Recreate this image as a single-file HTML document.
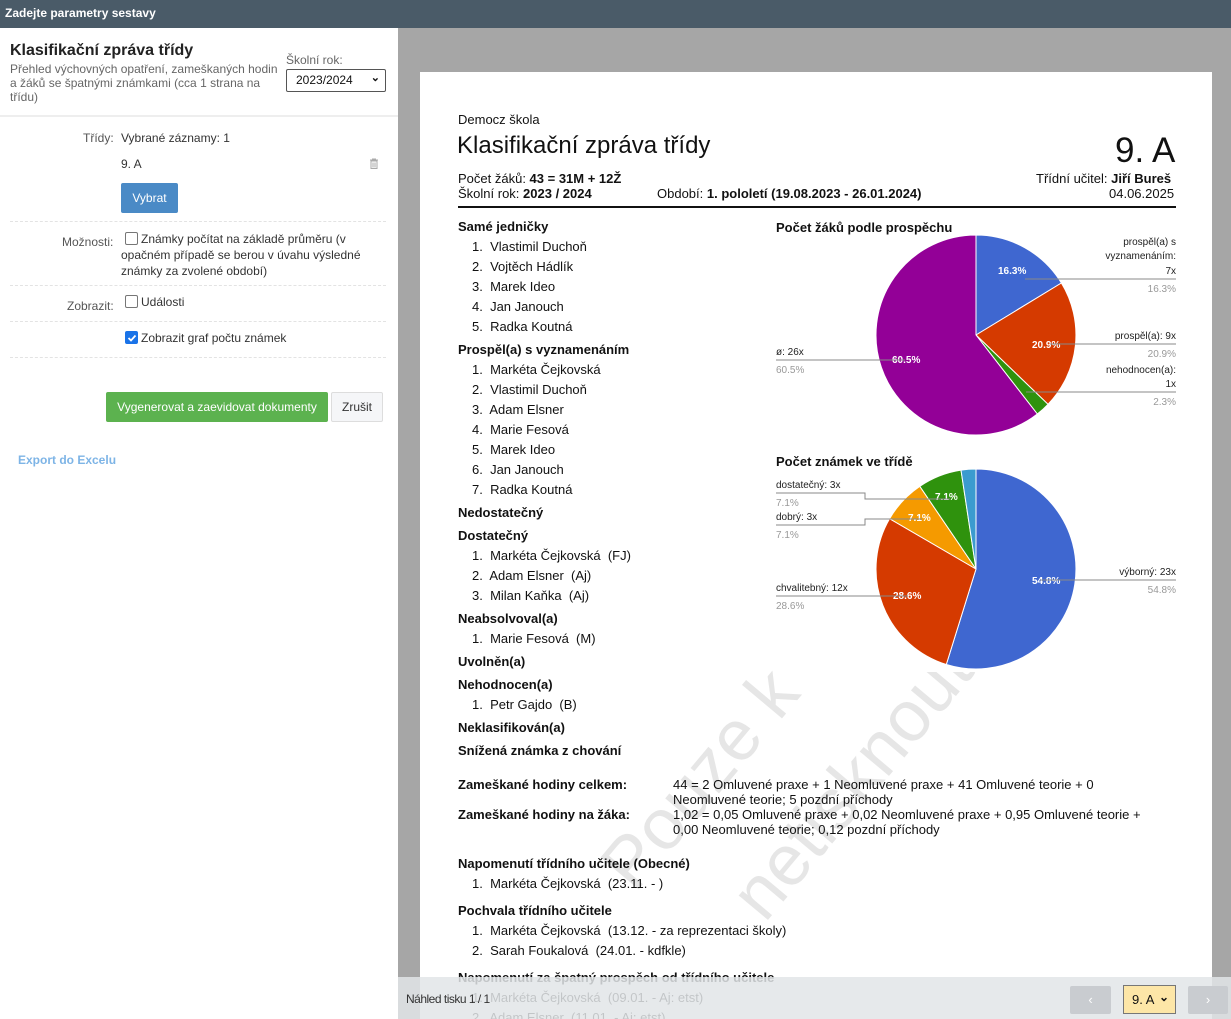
<!DOCTYPE html>
<html><head><meta charset="utf-8"><style>
*{margin:0;padding:0;box-sizing:border-box}
html,body{width:1231px;height:1019px;overflow:hidden}
body{position:relative;font-family:"Liberation Sans",Arial,sans-serif;background:#a6a6a6;color:#222}
.a{position:absolute;white-space:nowrap}
.top{left:0;top:0;width:1231px;height:28px;background:#4a5b68;color:#fff;font-weight:bold;font-size:12px;padding:6px 5px}
.left{left:0;top:28px;width:398px;height:991px;background:#fff}
.paper{left:420px;top:72px;width:792px;height:947px;background:#fff;overflow:hidden}
.p{font-size:13px;color:#111;line-height:16px}
.b{font-weight:bold}
.dash{position:absolute;left:10px;width:376px;border-top:1px dashed #e3e3e3}
.lbl{font-size:12px;color:#555}
.sm{font-size:12px;color:#333}
.cb{display:inline-block;width:13px;height:13px;border:1px solid #767676;border-radius:2px;vertical-align:-2px;margin-right:3px;background:#fff}
</style></head><body>
<div class="a top">Zadejte parametry sestavy</div>
<div class="a left">
 <div class="a b" style="left:10px;top:14px;font-size:16px;color:#222">Klasifikační zpráva třídy</div>
 <div class="a" style="left:10px;top:34px;width:272px;white-space:normal;font-size:12px;line-height:14px;color:#666">Přehled výchovných opatření, zameškaných hodin a žáků se špatnými známkami (cca 1 strana na třídu)</div>
 <div class="a" style="left:286px;top:25px;font-size:12px;color:#666">Školní rok:</div>
 <div class="a" style="left:286px;top:41px;width:100px;height:23px;border:1px solid #555;border-radius:2px;font-size:12px;padding:3px 9px;color:#111">2023/2024<span style="position:absolute;right:5px;top:1px;font-size:11px;font-weight:bold">&#8964;</span></div>
 <div class="a" style="left:0;top:87px;width:398px;height:2px;background:#eee"></div>
 <div class="a lbl" style="left:83px;top:103px">Třídy:</div>
 <div class="a sm" style="left:121px;top:103px">Vybrané záznamy: 1</div>
 <div class="a sm" style="left:121px;top:129px">9. A</div>
 <svg class="a" style="left:369px;top:130px" width="10" height="11" viewBox="0 0 10 11"><path d="M1 2h8M3.5 2V1h3v1M2 3h6v7.5H2z" fill="none" stroke="#aaa" stroke-width="1"/><path d="M4 4.5v5M6 4.5v5" stroke="#aaa"/></svg>
 <div class="a" style="left:121px;top:155px;width:57px;height:30px;background:#4a8ac6;border-radius:2px;color:#fff;font-size:12px;text-align:center;line-height:30px">Vybrat</div>
 <div class="dash" style="top:193px"></div>
 <div class="a lbl" style="left:62px;top:207px">Možnosti:</div>
 <div class="a sm" style="left:121px;top:203px;width:260px;white-space:normal;line-height:16px"><span class="cb" style="margin-left:4px"></span>Známky počítat na základě průměru (v opačném případě se berou v úvahu výsledné známky za zvolené období)</div>
 <div class="dash" style="top:257px"></div>
 <div class="a lbl" style="left:67px;top:271px">Zobrazit:</div>
 <div class="a sm" style="left:125px;top:267px"><span class="cb"></span>Události</div>
 <div class="dash" style="top:293px"></div>
 <div class="a sm" style="left:125px;top:303px"><span class="cb" style="background:#1a73e8;border-color:#1a73e8;position:relative"><svg style="position:absolute;left:1px;top:1px" width="10" height="10"><path d="M1.5 5l2.5 2.5 4.5-5" stroke="#fff" stroke-width="1.8" fill="none"/></svg></span>Zobrazit graf počtu známek</div>
 <div class="dash" style="top:329px"></div>
 <div class="a" style="left:106px;top:364px;width:222px;height:30px;background:#5cb24f;border-radius:2px;color:#fff;font-size:12px;text-align:center;line-height:30px">Vygenerovat a zaevidovat dokumenty</div>
 <div class="a" style="left:331px;top:364px;width:52px;height:30px;background:#f5f6f8;border:1px solid #ddd;border-radius:2px;font-size:12px;text-align:center;line-height:28px;color:#333">Zrušit</div>
 <div class="a" style="left:18px;top:425px;font-size:12px;color:#7db4e6;font-weight:bold">Export do Excelu</div>
</div>

<div class="a paper">
 <div class="a" style="left:165px;top:780px;font-size:72px;color:#e6e6e6;transform:rotate(-50deg);transform-origin:0 0">Pouze k</div>
 <div class="a" style="left:295px;top:810px;font-size:72px;color:#e6e6e6;transform:rotate(-50deg);transform-origin:0 0">netisknout</div>
 <div style="position:absolute;left:-420px;top:-72px">
 <div class="a p" style="left:458px;top:112px">Democz škola</div>
 <div class="a" style="left:457px;top:132px;font-size:24px;color:#111">Klasifikační zpráva třídy</div>
 <div class="a" style="left:1115px;top:131px;font-size:35px;color:#111">9. A</div>
 <div class="a p" style="left:458px;top:171px">Počet žáků: <b>43 = 31M + 12Ž</b></div>
 <div class="a p" style="left:458px;top:186px">Školní rok: <b>2023 / 2024</b></div>
 <div class="a p" style="left:657px;top:186px">Období: <b>1. pololetí (19.08.2023 - 26.01.2024)</b></div>
 <div class="a p" style="left:1036px;top:171px">Třídní učitel: <b>Jiří Bureš</b></div>
 <div class="a p" style="left:1109px;top:186px">04.06.2025</div>
 <div class="a" style="left:458px;top:206px;width:718px;height:2px;background:#111"></div>

 <div class="a p b" style="left:458px;top:219px">Samé jedničky</div>
 <div class="a p" style="left:472px;top:239px">1.&nbsp; Vlastimil Duchoň</div>
 <div class="a p" style="left:472px;top:259px">2.&nbsp; Vojtěch Hádlík</div>
 <div class="a p" style="left:472px;top:279px">3.&nbsp; Marek Ideo</div>
 <div class="a p" style="left:472px;top:299px">4.&nbsp; Jan Janouch</div>
 <div class="a p" style="left:472px;top:319px">5.&nbsp; Radka Koutná</div>
 <div class="a p b" style="left:458px;top:342px">Prospěl(a) s vyznamenáním</div>
 <div class="a p" style="left:472px;top:362px">1.&nbsp; Markéta Čejkovská</div>
 <div class="a p" style="left:472px;top:382px">2.&nbsp; Vlastimil Duchoň</div>
 <div class="a p" style="left:472px;top:402px">3.&nbsp; Adam Elsner</div>
 <div class="a p" style="left:472px;top:422px">4.&nbsp; Marie Fesová</div>
 <div class="a p" style="left:472px;top:442px">5.&nbsp; Marek Ideo</div>
 <div class="a p" style="left:472px;top:462px">6.&nbsp; Jan Janouch</div>
 <div class="a p" style="left:472px;top:482px">7.&nbsp; Radka Koutná</div>
 <div class="a p b" style="left:458px;top:505px">Nedostatečný</div>
 <div class="a p b" style="left:458px;top:528px">Dostatečný</div>
 <div class="a p" style="left:472px;top:548px">1.&nbsp; Markéta Čejkovská&nbsp; (FJ)</div>
 <div class="a p" style="left:472px;top:568px">2.&nbsp; Adam Elsner&nbsp; (Aj)</div>
 <div class="a p" style="left:472px;top:588px">3.&nbsp; Milan Kaňka&nbsp; (Aj)</div>
 <div class="a p b" style="left:458px;top:611px">Neabsolvoval(a)</div>
 <div class="a p" style="left:472px;top:631px">1.&nbsp; Marie Fesová&nbsp; (M)</div>
 <div class="a p b" style="left:458px;top:654px">Uvolněn(a)</div>
 <div class="a p b" style="left:458px;top:677px">Nehodnocen(a)</div>
 <div class="a p" style="left:472px;top:697px">1.&nbsp; Petr Gajdo&nbsp; (B)</div>
 <div class="a p b" style="left:458px;top:720px">Neklasifikován(a)</div>
 <div class="a p b" style="left:458px;top:743px">Snížená známka z chování</div>
 <div class="a p b" style="left:458px;top:777px">Zameškané hodiny celkem:</div>
 <div class="a p" style="left:673px;top:777px;line-height:15px">44 = 2 Omluvené praxe + 1 Neomluvené praxe + 41 Omluvené teorie + 0<br>Neomluvené teorie; 5 pozdní příchody</div>
 <div class="a p b" style="left:458px;top:807px">Zameškané hodiny na žáka:</div>
 <div class="a p" style="left:673px;top:807px;line-height:15px">1,02 = 0,05 Omluvené praxe + 0,02 Neomluvené praxe + 0,95 Omluvené teorie +<br>0,00 Neomluvené teorie; 0,12 pozdní příchody</div>
 <div class="a p b" style="left:458px;top:856px">Napomenutí třídního učitele (Obecné)</div>
 <div class="a p" style="left:472px;top:876px">1.&nbsp; Markéta Čejkovská&nbsp; (23.11. - )</div>
 <div class="a p b" style="left:458px;top:903px">Pochvala třídního učitele</div>
 <div class="a p" style="left:472px;top:923px">1.&nbsp; Markéta Čejkovská&nbsp; (13.12. - za reprezentaci školy)</div>
 <div class="a p" style="left:472px;top:943px">2.&nbsp; Sarah Foukalová&nbsp; (24.01. - kdfkle)</div>
 <div class="a p b" style="left:458px;top:970px">Napomenutí za špatný prospěch od třídního učitele</div>
 <div class="a p" style="left:472px;top:990px">1.&nbsp; Markéta Čejkovská&nbsp; (09.01. - Aj: etst)</div>
 <div class="a p" style="left:472px;top:1010px">2.&nbsp; Adam Elsner&nbsp; (11.01. - Aj: etst)</div>

 <svg class="a" style="left:770px;top:212px" width="412" height="460" viewBox="770 212 412 460" font-family="Liberation Sans, Arial, sans-serif">
  <rect x="770" y="212" width="412" height="440" fill="#fff"/>
  <rect x="860" y="640" width="230" height="32" fill="#fff"/>
  <text x="776" y="232" font-size="13" font-weight="bold" fill="#111">Počet žáků podle prospěchu</text>
  <g stroke="#fff" stroke-width="1">
   <path d="M976 335V235A100 100 0 0 1 1061.4 283Z" fill="#3f67d0"/>
   <path d="M976 335L1061.4 283A100 100 0 0 1 1048 404.3Z" fill="#d53a00"/>
   <path d="M976 335L1048 404.3A100 100 0 0 1 1037.3 414Z" fill="#2f920d"/>
   <path d="M976 335L1037.3 414A100 100 0 1 1 976 235Z" fill="#930097"/>
  </g>
  <g font-size="10" font-weight="bold" fill="#fff"><text x="998" y="274">16.3%</text><text x="1032" y="348">20.9%</text><text x="892" y="363">60.5%</text></g>
  <g stroke="#888" stroke-width="1" fill="none"><path d="M1025 279H1176"/><path d="M1050 344H1176"/><path d="M1026 392H1176"/><path d="M776 360H905"/></g>
  <g font-size="10" fill="#222" text-anchor="end"><text x="1176" y="245">prospěl(a) s</text><text x="1176" y="259">vyznamenáním:</text><text x="1176" y="274">7x</text><text x="1176" y="339">prospěl(a): 9x</text><text x="1176" y="373">nehodnocen(a):</text><text x="1176" y="387">1x</text></g>
  <g font-size="10" fill="#999" text-anchor="end"><text x="1176" y="292">16.3%</text><text x="1176" y="357">20.9%</text><text x="1176" y="405">2.3%</text></g>
  <text x="776" y="355" font-size="10" fill="#222">ø: 26x</text><text x="776" y="373" font-size="10" fill="#999">60.5%</text>

  <text x="776" y="466" font-size="13" font-weight="bold" fill="#111">Počet známek ve třídě</text>
  <g stroke="#fff" stroke-width="1">
   <path d="M976 569V469A100 100 0 1 1 946.3 664.5Z" fill="#3f67d0"/>
   <path d="M976 569L946.3 664.5A100 100 0 0 1 889.6 518.7Z" fill="#d53a00"/>
   <path d="M976 569L889.6 518.7A100 100 0 0 1 919.8 486.3Z" fill="#f59a00"/>
   <path d="M976 569L919.8 486.3A100 100 0 0 1 961 470.1Z" fill="#2f920d"/>
   <path d="M976 569L961 470.1A100 100 0 0 1 976 469Z" fill="#3b9bcf"/>
  </g>
  <g font-size="10" font-weight="bold" fill="#fff"><text x="935" y="500">7.1%</text><text x="908" y="521">7.1%</text><text x="1032" y="584">54.8%</text><text x="893" y="599">28.6%</text></g>
  <g stroke="#888" stroke-width="1" fill="none"><path d="M776 493H865V499H950"/><path d="M776 525H865V519H922"/><path d="M1040 580H1176"/><path d="M776 596H908"/></g>
  <g font-size="10" fill="#222"><text x="776" y="488">dostatečný: 3x</text><text x="776" y="520">dobrý: 3x</text><text x="776" y="591">chvalitebný: 12x</text></g>
  <g font-size="10" fill="#999"><text x="776" y="506">7.1%</text><text x="776" y="538">7.1%</text><text x="776" y="609">28.6%</text></g>
  <text x="1176" y="575" font-size="10" fill="#222" text-anchor="end">výborný: 23x</text>
  <text x="1176" y="593" font-size="10" fill="#999" text-anchor="end">54.8%</text>
 </svg>
 </div>
</div>

<div class="a" style="left:398px;top:977px;width:833px;height:42px;background:rgba(226,229,232,0.85)"></div>
<div class="a" style="left:406px;top:992px;font-size:12px;color:#333;letter-spacing:-0.5px">Náhled tisku 1 / 1</div>
<div class="a" style="left:1070px;top:986px;width:41px;height:28px;background:#c9ccd0;border-radius:2px;color:#fff;text-align:center;line-height:27px;font-size:13px">‹</div>
<div class="a" style="left:1123px;top:985px;width:53px;height:29px;background:#fde6a7;border:1px solid #777;font-size:13px;padding:6px 8px;color:#111">9. A<span style="position:absolute;right:6px;top:4px;font-weight:bold;font-size:12px">&#8964;</span></div>
<div class="a" style="left:1188px;top:986px;width:40px;height:28px;background:#c9ccd0;border-radius:2px;color:#fff;text-align:center;line-height:27px;font-size:13px">›</div>
</body></html>
